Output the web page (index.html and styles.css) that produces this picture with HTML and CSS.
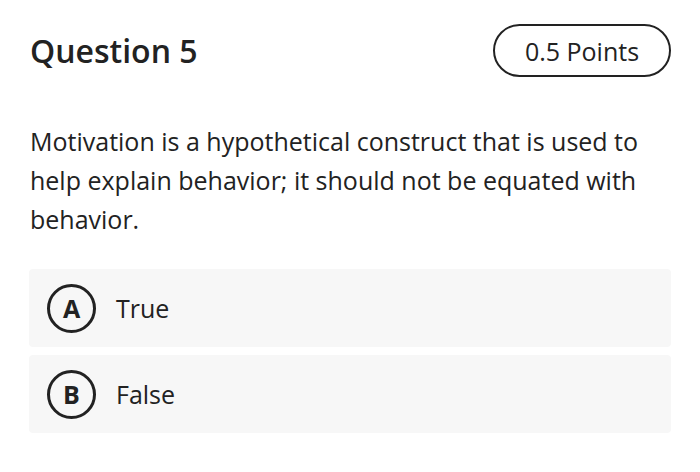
FILE: index.html
```html
<!DOCTYPE html>
<html>
<head>
<meta charset="utf-8">
<link rel="stylesheet" href="styles.css">
</head>
<body>
<div class="page">
  <div class="header">
    <h1 class="title">Question 5</h1>
    <div class="points">0.5 Points</div>
  </div>
  <p class="question">Motivation is a hypothetical construct that is used to help explain behavior; it should not be equated with behavior.</p>
  <div class="options">
    <div class="option"><span class="letter">A</span><span class="label">True</span></div>
    <div class="option"><span class="letter">B</span><span class="label">False</span></div>
  </div>
</div>
</body>
</html>
```

FILE: styles.css
```css
html, body {
  margin: 0;
  padding: 0;
  background: #ffffff;
}
body {
  font-family: "Open Sans", "Noto Sans", sans-serif;
  color: #222222;
}
.page {
  padding: 24px 29px 0 29px;
}
.header {
  display: flex;
  justify-content: space-between;
  align-items: center;
  height: 53px;
}
.title {
  margin: 0 0 0 1px;
  font-size: 32px;
  font-weight: 600;
  letter-spacing: 0;
}
.points {
  box-sizing: border-box;
  width: 178px;
  height: 53px;
  border: 2px solid #222;
  border-radius: 27px;
  display: flex;
  align-items: center;
  justify-content: center;
  font-size: 25px;
  font-weight: 500;
}
.question {
  margin: 45px 0 0 1px;
  font-size: 25px;
  line-height: 39px;
  font-weight: 400;
}
.options {
  margin-top: 30px;
  display: flex;
  flex-direction: column;
  gap: 8px;
}
.option {
  background: #f7f7f7;
  border-radius: 4px;
  height: 78px;
  display: flex;
  align-items: center;
  padding-left: 18px;
}
.letter {
  box-sizing: border-box;
  width: 49px;
  height: 49px;
  border: 3px solid #222;
  border-radius: 50%;
  display: flex;
  align-items: center;
  justify-content: center;
  font-size: 25px;
  font-weight: 700;
}
.label {
  margin-left: 20px;
  font-size: 25px;
  font-weight: 500;
}
```
